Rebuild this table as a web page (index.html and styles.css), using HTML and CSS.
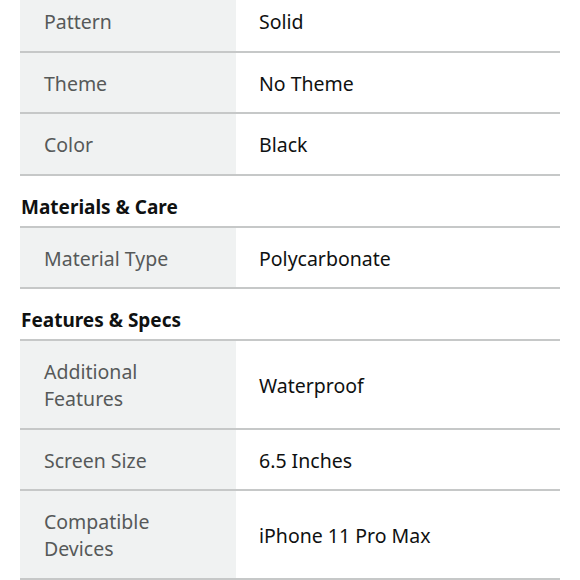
FILE: index.html
```html
<!DOCTYPE html>
<html>
<head>
<meta charset="utf-8">
<link rel="stylesheet" href="styles.css">
</head>
<body>
<div class="page">
  <table class="spec">
    <tr><th>Pattern</th><td>Solid</td></tr>
    <tr><th>Theme</th><td>No Theme</td></tr>
    <tr><th>Color</th><td>Black</td></tr>
  </table>
  <h2 class="section">Materials &amp; Care</h2>
  <table class="spec">
    <tr><th>Material Type</th><td>Polycarbonate</td></tr>
  </table>
  <h2 class="section">Features &amp; Specs</h2>
  <table class="spec">
    <tr><th>Additional<br>Features</th><td>Waterproof</td></tr>
    <tr><th>Screen Size</th><td>6.5 Inches</td></tr>
    <tr><th>Compatible<br>Devices</th><td>iPhone 11 Pro Max</td></tr>
  </table>
</div>
</body>
</html>
```
FILE: styles.css
```css
html, body {
  margin: 0;
  padding: 0;
  background: #ffffff;
}
body {
  font-family: "Noto Sans", "Liberation Sans", sans-serif;
  overflow: hidden;
}
.page {
  width: 540px;
  margin: -9px 0 0 20px;
}
.spec {
  width: 540px;
  border-collapse: collapse;
  table-layout: fixed;
}
.spec tr {
  border-bottom: 2px solid #c6c8c8;
}
.spec th,
.spec td {
  padding: 17px 0 15.5px 23px;
  font-size: 19.5px;
  line-height: 27px;
  font-weight: 400;
  text-align: left;
  vertical-align: middle;
}
.spec th {
  width: 192px;
  background: #f0f2f2;
  color: #565959;
  padding-left: 24px;
}
.spec td {
  color: #0f1111;
}
.section {
  margin: 0;
  height: 52px;
  padding: 18px 0 0 1px;
  line-height: 27px;
  font-size: 19px;
  font-weight: 700;
  color: #0f1111;
  border-bottom: 2px solid #c6c8c8;
  box-sizing: border-box;
}
```
